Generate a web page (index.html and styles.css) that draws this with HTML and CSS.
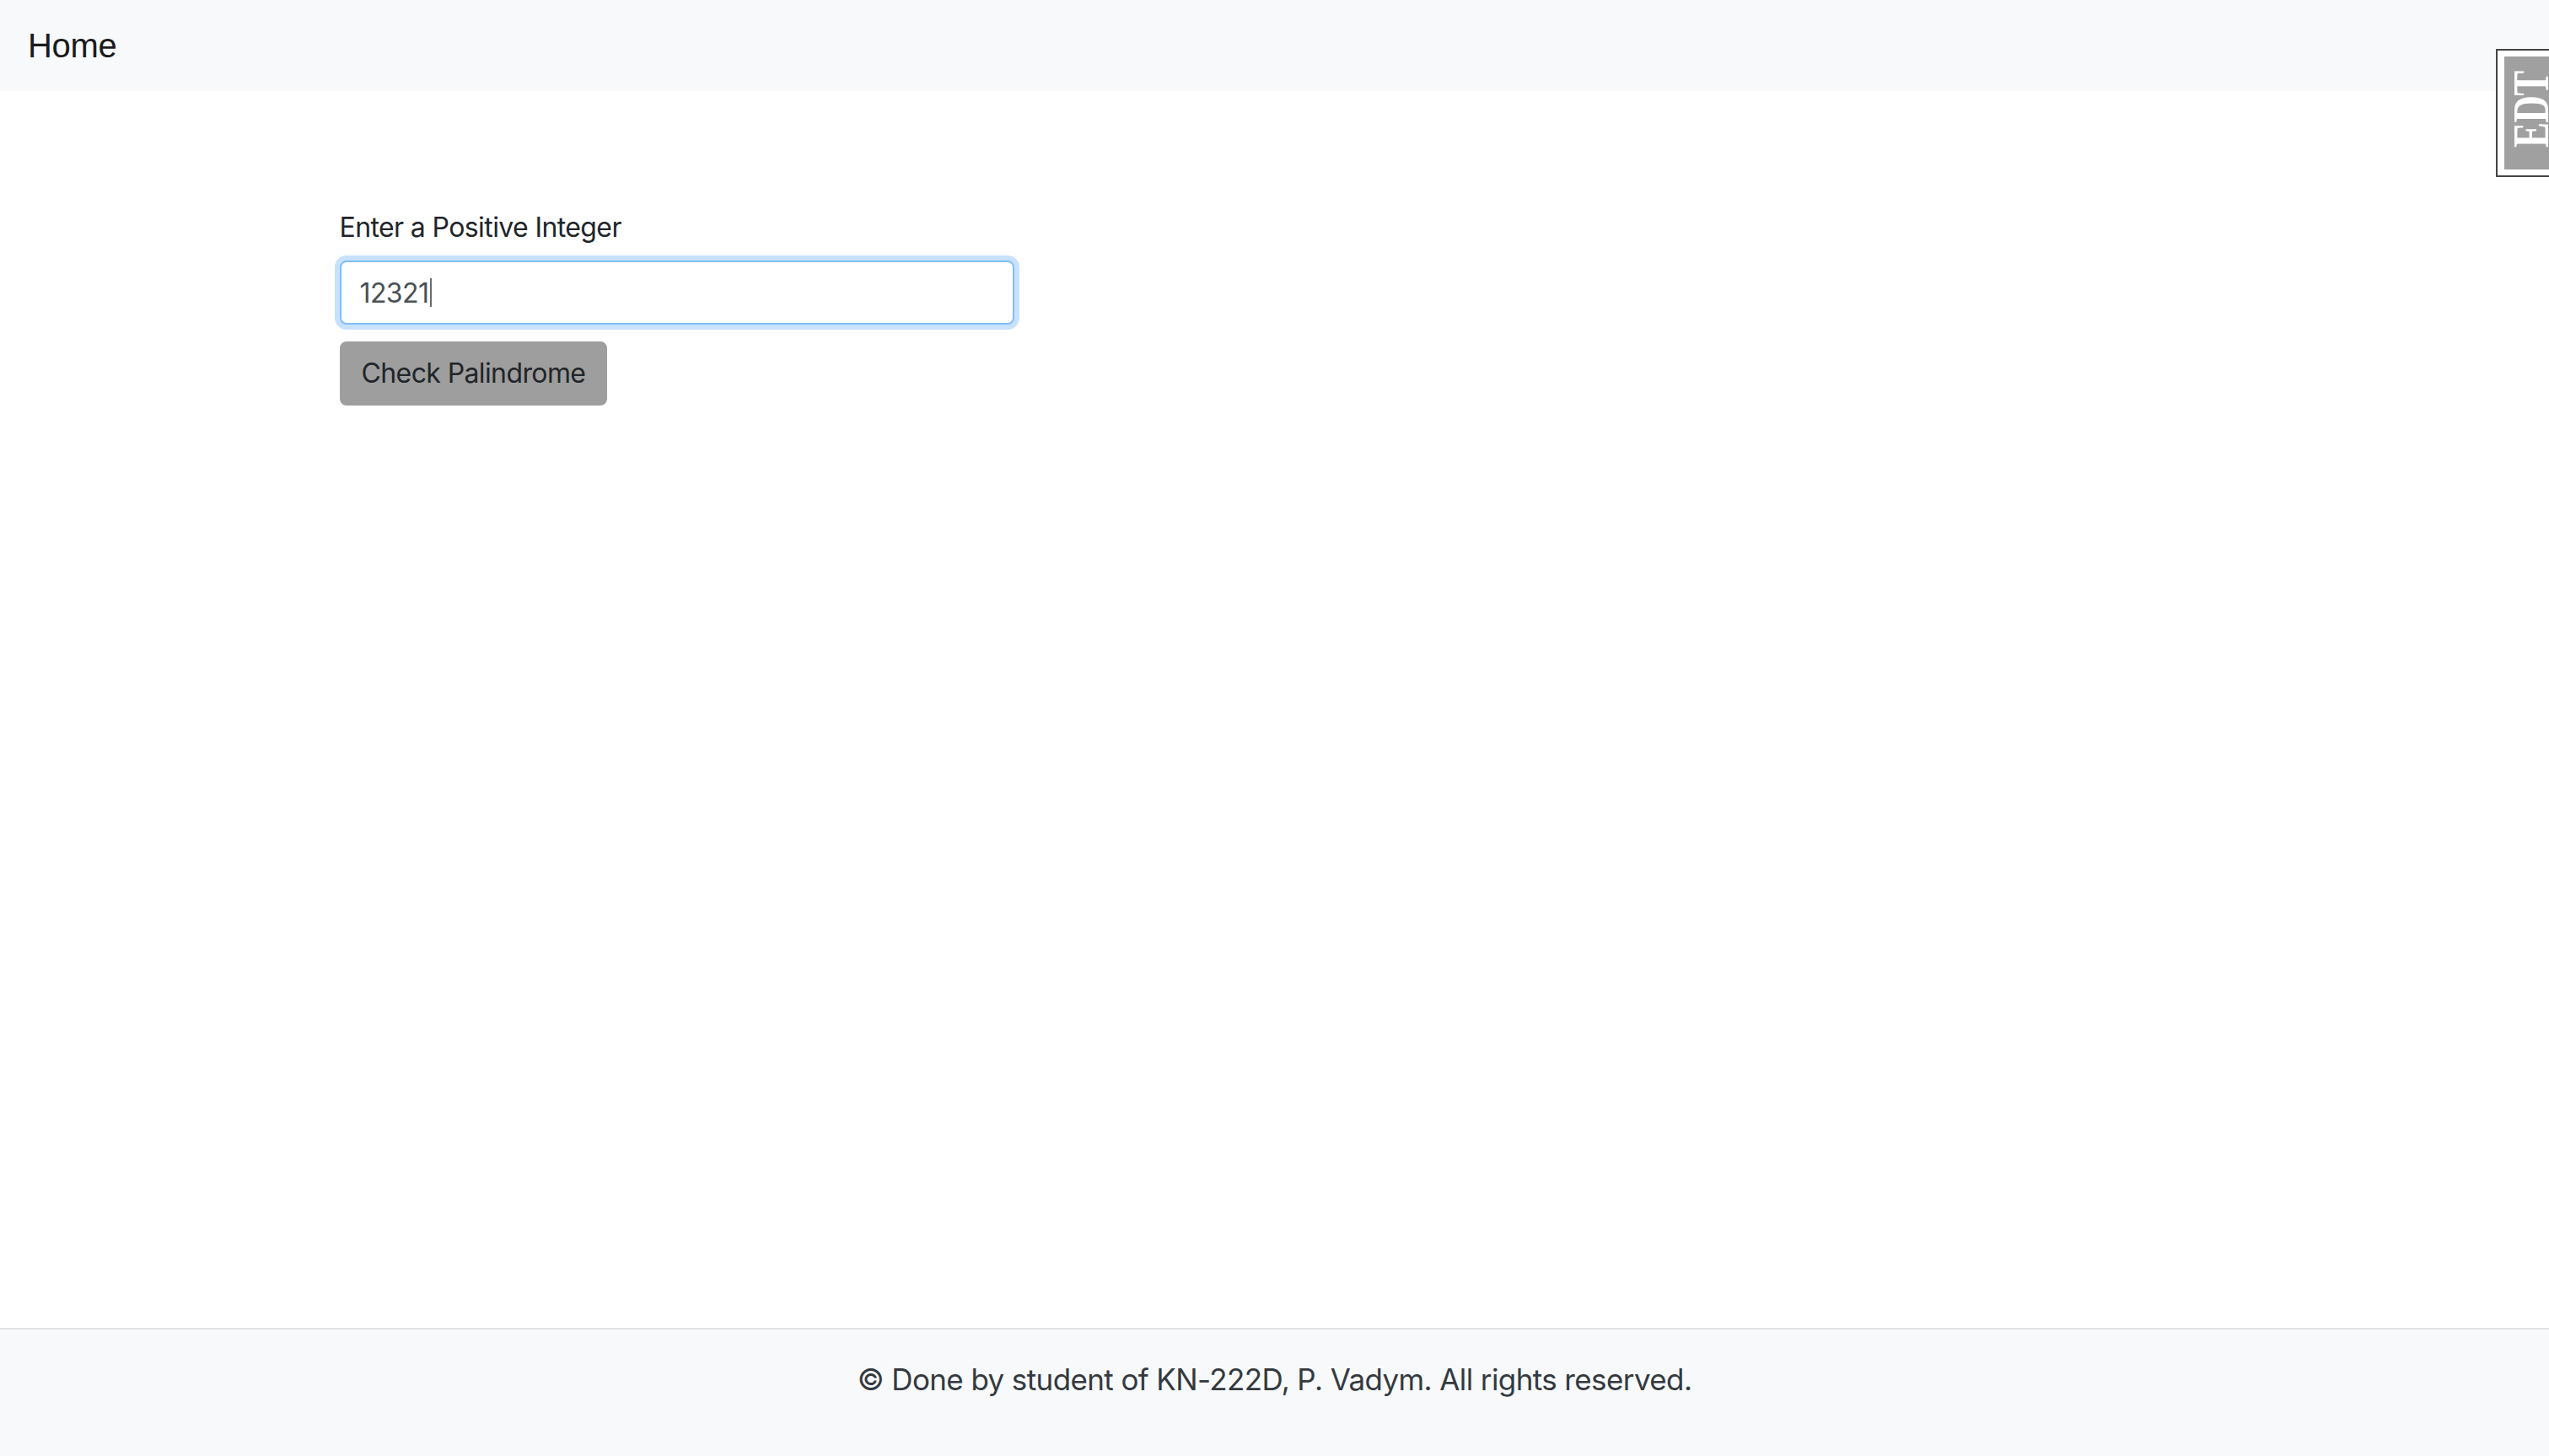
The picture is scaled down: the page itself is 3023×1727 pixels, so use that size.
FILE: index.html
```html
<!DOCTYPE html>
<html lang="en">
<head>
<meta charset="utf-8">
<title>Palindrome</title>
<link rel="stylesheet" href="styles.css">
</head>
<body>
<header class="navbar">
  <a class="brand" href="#">Home</a>
</header>
<main class="main">
  <div class="container">
    <form class="form">
      <label class="label" for="num">Enter a Positive Integer</label>
      <div class="field">
        <input class="control focused" id="num" type="text" value="12321">
        <span class="caret"></span>
      </div>
      <button class="btn" type="button">Check Palindrome</button>
    </form>
  </div>
</main>
<footer class="footer">
  <span>© Done by student of KN-222D, P. Vadym. All rights reserved.</span>
</footer>
<div class="badge">
  <div class="badge-inner">
    <svg class="badge-svg" width="60" height="134" viewBox="0 0 60 134">
      <text transform="translate(52,108) rotate(-90) scale(1,1.36)" font-family="Liberation Serif" font-weight="bold" font-size="45" fill="#ffffff">EDT</text>
    </svg>
  </div>
</div>
</body>
</html>
```
FILE: styles.css
```css
* { box-sizing: border-box; }
html, body { margin: 0; padding: 0; }
body {
  font-family: Inter, "Noto Sans", sans-serif;
  font-size: 32px;
  line-height: 1.5;
  letter-spacing: -0.019em;
  color: #212529;
  background: #ffffff;
  min-height: 100vh;
  display: flex;
  flex-direction: column;
}
.navbar {
  height: 108px;
  background: #f8f9fa;
  display: flex;
  align-items: center;
  padding: 0 33px;
}
.brand {
  font-family: "Liberation Sans", Arial, sans-serif;
  font-size: 40px;
  line-height: 60px;
  letter-spacing: -0.3px;
  color: #1b1b1b;
  text-decoration: none;
}
.main {
  flex: 1;
  padding-top: 138px;
}
.container {
  width: 2280px;
  margin: 0 auto;
  padding: 0 31px;
}
.form {
  display: flex;
  flex-direction: column;
  align-items: flex-start;
}
.label {
  display: block;
  margin-bottom: 15px;
}
.field {
  position: relative;
}
.control {
  display: block;
  width: 800px;
  height: 76px;
  padding: 12px 22px;
  font: inherit;
  font-size: 32px;
  letter-spacing: -0.019em;
  color: #495057;
  background: #fff;
  border: 2px solid #ced4da;
  border-radius: 8px;
  outline: none;
}
.control.focused {
  border-color: #80bdff;
  box-shadow: 0 0 0 6px rgba(0, 123, 255, 0.22);
}
.caret {
  position: absolute;
  left: 107px;
  top: 21px;
  width: 2px;
  height: 34px;
  background: #6c6c6c;
}
.btn {
  margin-top: 20px;
  height: 76px;
  padding: 12px 24px;
  font: inherit;
  font-size: 32px;
  letter-spacing: -0.019em;
  color: #212529;
  background: #9e9e9e;
  border: 2px solid #9e9e9e;
  border-radius: 8px;
}
.footer {
  border-top: 2px solid #e3e3e3;
  background: #f8f9fa;
  height: 152px;
  padding-top: 33px;
  text-align: center;
  font-size: 35px;
  color: #343a40;
}
.badge {
  position: fixed;
  top: 58px;
  left: 2960px;
  right: 0;
  height: 152px;
  background: #ffffff;
  border: 2px solid #444;
  border-right: none;
  padding: 7px 0 7px 8px;
}
.badge-inner {
  height: 134px;
  background: #a0a0a0;
  overflow: hidden;
}
.badge-svg { display: block; }
```
